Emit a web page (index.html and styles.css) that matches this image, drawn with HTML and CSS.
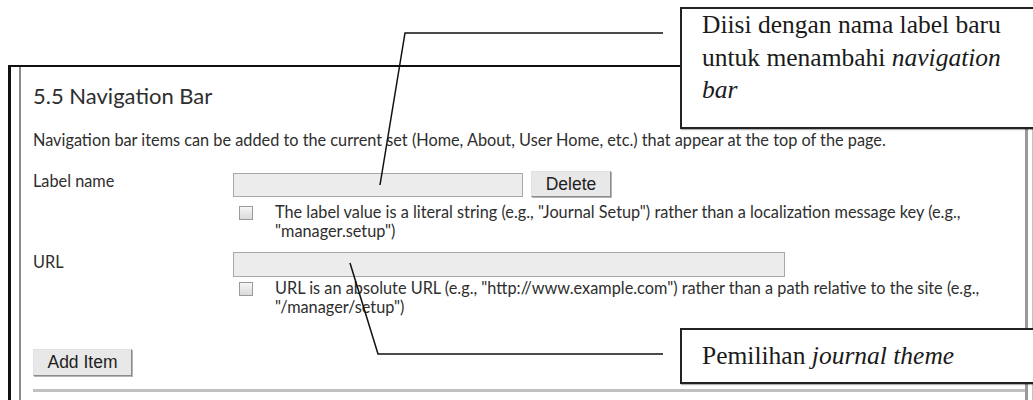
FILE: index.html
```html
<!DOCTYPE html>
<html lang="en">
<head>
<meta charset="utf-8">
<title>5.5 Navigation Bar</title>
<link rel="stylesheet" href="styles.css">
</head>
<body>
<div class="frame">
  <div class="panel">
    <h2 class="title">5.5 Navigation Bar</h2>
    <p class="desc">Navigation bar items can be added to the current set (Home, About, User Home, etc.) that appear at the top of the page.</p>
    <div class="form">
      <div class="label">Label name</div>
      <div class="field">
        <div class="field-row">
          <div class="input input-label"></div>
          <button class="btn btn-delete" type="button">Delete</button>
        </div>
        <div class="check check-first">
          <span class="box"></span>
          <span class="check-text">The label value is a literal string (e.g., "Journal Setup") rather than a localization message key (e.g., "manager.setup")</span>
        </div>
      </div>
      <div class="label">URL</div>
      <div class="field">
        <div class="input input-url"></div>
        <div class="check check-second">
          <span class="box"></span>
          <span class="check-text">URL is an absolute URL (e.g., "http://www.example.com") rather than a path relative to the site (e.g., "/manager/setup")</span>
        </div>
      </div>
    </div>
    <button class="btn btn-add" type="button">Add Item</button>
    <div class="sep"></div>
  </div>
</div>
<svg class="leaders" width="1033" height="400" viewBox="0 0 1033 400">
  <polyline points="663,33 405,33 380,185" fill="none" stroke="#111" stroke-width="1.5"/>
  <polyline points="663,354 378,354 350,263" fill="none" stroke="#111" stroke-width="1.5"/>
</svg>
<div class="callout c1">
  <p class="callout-text">
    <span class="line">Diisi dengan nama label baru</span>
    <span class="line">untuk menambahi <i>navigation</i></span>
    <span class="line"><i>bar</i></span>
  </p>
</div>
<div class="callout c2"><p class="callout-text"><span class="line">Pemilihan <i>journal theme</i></span></p></div>
</body>
</html>
```
FILE: styles.css
```css
html, body {
  margin: 0;
  padding: 0;
  background: #fff;
  overflow: hidden;
  height: 400px;
}
body {
  position: relative;
  width: 1033px;
  font-family: Lato, "Liberation Sans", sans-serif;
  color: #2e2e2e;
}
.frame {
  margin: 65px 0 0 8px;
  border-left: 3px solid #111;
  border-top: 2px solid #111;
  height: 335px;
  box-sizing: border-box;
}
.panel {
  margin-left: 8px;
  width: 1009px;
  height: 100%;
  box-sizing: border-box;
  border-left: 2px solid #8a8a8a;
  border-right: 3px solid #999;
  box-shadow: 4px 0 0 #fff, 5px 0 0 #c4c4c4;
  padding: 15px 0 0 12px;
}
.title {
  margin: 0;
  font-size: 22px;
  line-height: 28px;
  font-weight: 400;
  color: #2e2e2e;
}
.desc {
  margin: 20px 0 0;
  font-size: 16.3px;
  line-height: 20px;
}
.form {
  margin-top: 21px;
  display: grid;
  grid-template-columns: 200px 1fr;
  row-gap: 12px;
}
.label {
  font-size: 16.3px;
  line-height: 20px;
}
.field-row {
  display: flex;
  align-items: flex-end;
  gap: 8px;
}
.input {
  box-sizing: border-box;
  border: 1px solid #a8a8a8;
  background: #ececec;
}
.input-label {
  width: 290px;
  height: 24px;
}
.input-url {
  width: 552px;
  height: 25px;
}
.btn {
  font-family: "Liberation Sans", Arial, sans-serif;
  font-size: 17.5px;
  color: #1e1e1e;
  background: #e8e8e8;
  border: 1px solid;
  border-color: #e2e2e2 #8c8c8c #8c8c8c #e2e2e2;
  box-shadow: 1px 1px 0 #b4b4b4;
  padding: 0;
  margin: 0;
}
.btn-delete {
  width: 80px;
  height: 26px;
}
.btn-add {
  display: block;
  margin-top: 33px;
  width: 99px;
  height: 27px;
}
.check {
  display: flex;
}
.check-first {
  margin-top: 5px;
}
.check-second {
  margin-top: 1px;
}
.box {
  flex: none;
  width: 14px;
  height: 14px;
  box-sizing: border-box;
  border: 1px solid #9a9a9a;
  background: linear-gradient(#f6f6f6, #dadada);
  margin: 4px 0 0 6px;
}
.check-text {
  margin-left: 22px;
  width: 730px;
  font-size: 16.3px;
  line-height: 19px;
}
.sep {
  margin-top: 13px;
  height: 3px;
  background: #c0c0c0;
}
.leaders {
  position: absolute;
  left: 0;
  top: 0;
  pointer-events: none;
}
.callout {
  position: absolute;
  left: 680px;
  width: 380px;
  box-sizing: border-box;
  border: 2px solid #222;
  background: #fff;
  box-shadow: 1px 1px 1px rgba(0, 0, 0, 0.3);
  padding-left: 20px;
  font-family: "Liberation Serif", "Times New Roman", serif;
  font-size: 25.5px;
  line-height: 32.5px;
  color: #1a1a1a;
}
.callout-text {
  margin: 0;
}
.line {
  display: block;
  white-space: nowrap;
}
.c1 {
  top: 7px;
  height: 122px;
}
.c2 {
  top: 328px;
  height: 56px;
  display: flex;
  align-items: center;
}
```
